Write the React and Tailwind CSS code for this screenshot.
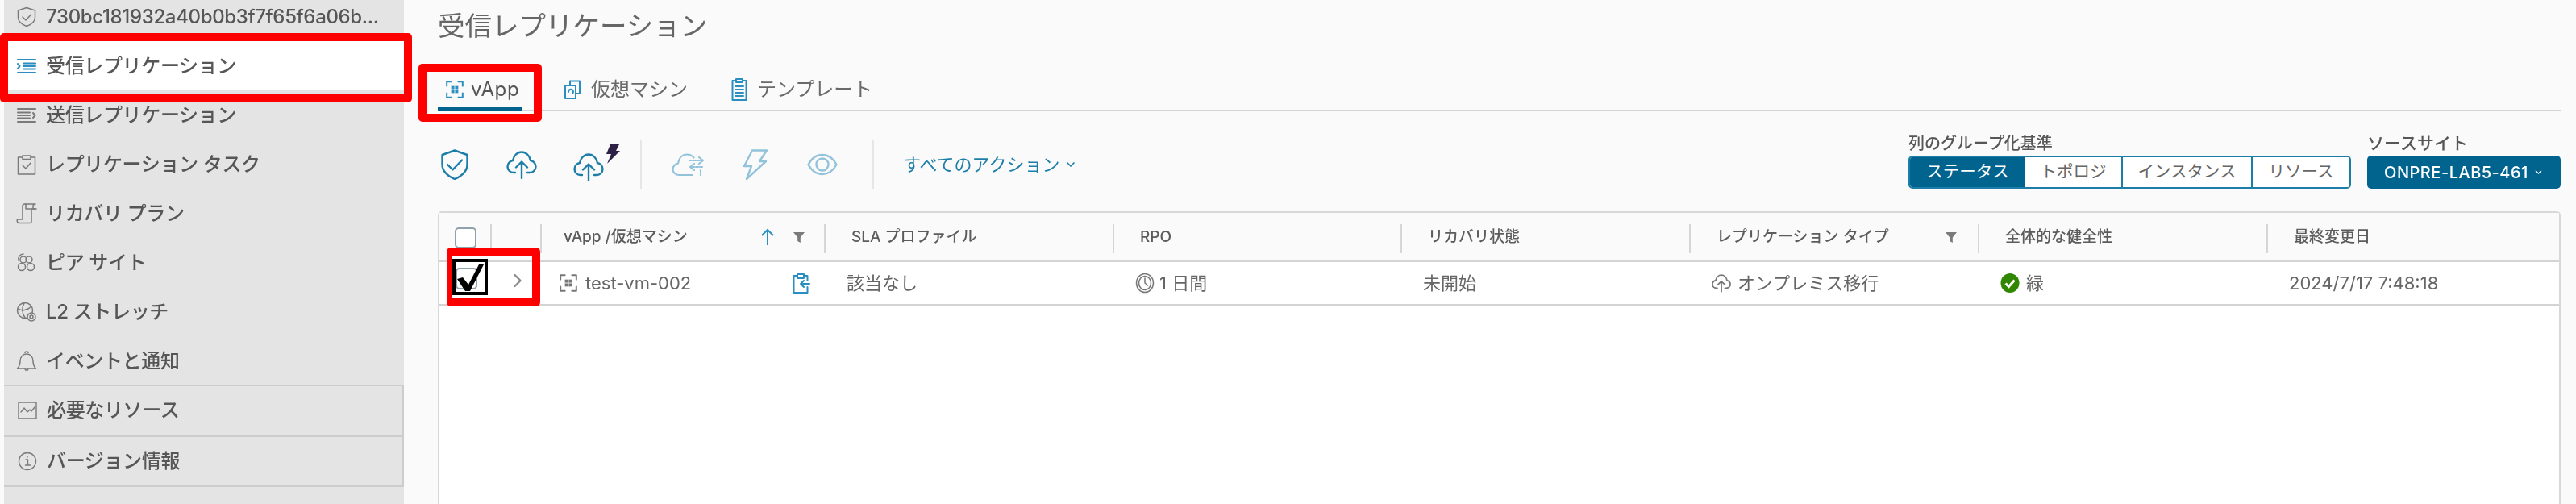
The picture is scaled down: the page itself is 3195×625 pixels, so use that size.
import { ChevronDown, ChevronRight } from 'lucide-react';

const FONT = 'font-["Inter","Noto_Sans_CJK_JP",sans-serif]';

function Ico({ w = 24, h = 24, vb, sw = 1.6, className = '', children }) {
  return (
    <svg
      width={w}
      height={h}
      viewBox={vb || `0 0 ${w} ${h}`}
      fill="none"
      stroke="currentColor"
      strokeWidth={sw}
      strokeLinecap="round"
      strokeLinejoin="round"
      className={`shrink-0 ${className}`}
    >
      {children}
    </svg>
  );
}

const ShieldIcon = ({ w = 34, h = 38, sw = 2.4 }) => (
  <Ico w={w} h={h} vb="0 0 34 38" sw={sw}>
    <path d="M17 1.5 32.5 7v12c0 9-7.5 14.500-15.500 18C9 33.500 1.500 28 1.500 19V7Z" />
    <path d="m8 19 6.500 6.500L26 13.500" />
  </Ico>
);

const CloudUp = ({ w = 38, h = 36, sw = 2.4 }) => (
  <Ico w={w} h={h} vb="0 0 38 36" sw={sw}>
    <path d="M11 28H9c-4.500 0-7.500-3.500-7.500-7.500s3-7 6.500-7.500C9 7 13.500 2.500 19 2.500S29 7 30 13c3.500.5 6.500 3.500 6.500 7.500S33.500 28 29 28h-3" />
    <path d="M19 35V15M12 21.500l7-7 7 7" />
  </Ico>
);

const VappIcon = ({ className = '' }) => (
  <Ico w={24} h={24} vb="0 0 22 22" sw={1.8} className={className}>
    <path d="M7 2H2v5M15 2h5v5M7 20H2v-5M15 20h5v-5" />
    <path d="M7 7h8v8H7z" fill="currentColor" stroke="none" />
    <path d="M11 7v8M7 11h8" stroke="#fafafa" strokeWidth="0.8" />
  </Ico>
);

const Filter = () => (
  <svg width="16" height="16" viewBox="0 0 16 16" className="shrink-0 text-[#7b7b7b]" fill="currentColor">
    <path d="M1 2h14L9.800 8.500V15l-3.600-2V8.500Z" />
  </svg>
);

const sideItems = [
  {
    label: '730bc181932a40b0b3f7f65f6a06b...',
    icon: (
      <Ico w={24} h={26} vb="0 0 24 26" sw={1.5}>
        <path d="M12 1.500 22.500 5v8.500c0 5.500-5 9-10.500 11C6.500 22.500 1.500 19 1.500 13.500V5Z" />
        <path d="m7 13 4 4 6.500-7" />
      </Ico>
    ),
  },
  {
    label: '受信レプリケーション',
    active: true,
    icon: (
      <Ico w={24} h={20} sw={2} className="text-[#2a8fc0]">
        <path d="M1 2h22M8 6.500h15M8 10h15M8 13.500h15M1 18h22" />
        <path d="m1 7 2.500 3L1 13" />
      </Ico>
    ),
  },
  {
    label: '送信レプリケーション',
    icon: (
      <Ico w={24} h={20} sw={2}>
        <path d="M1 2h22M1 6.500h15M1 10h15M1 13.500h15M1 18h22" />
        <path d="m20 7 2.500 3-2.500 3" />
      </Ico>
    ),
  },
  {
    label: 'レプリケーション タスク',
    icon: (
      <Ico w={24} h={26} vb="0 0 24 26" sw={1.5}>
        <path d="M7 4H1.500v21h21V4H17" />
        <path d="M7 2h10v4.500H7z" />
        <path d="m7 14 4 4 6-7" />
      </Ico>
    ),
  },
  {
    label: 'リカバリ プラン',
    icon: (
      <Ico w={26} h={26} sw={1.500}>
        <path d="M8 4c0-2 1-3 3-3h13c-2 0-3 1-3 3v3h4" />
        <path d="M8 4v16H2c-1 0-1.500 3.500 1 4.500h14c1.500 0 2-1 2-2V7" />
        <path d="M12 1v6h12" />
      </Ico>
    ),
  },
  {
    label: 'ピア サイト',
    icon: (
      <Ico w={26} h={26} sw={1.500}>
        <circle cx="9" cy="9" r="4" />
        <circle cx="16" cy="9" r="4" />
        <circle cx="7" cy="18" r="4.500" />
        <circle cx="18" cy="18" r="4.500" />
        <path d="M3 10C2 6 5 2 9 2" />
      </Ico>
    ),
  },
  {
    label: 'L2 ストレッチ',
    icon: (
      <Ico w={26} h={26} sw={1.500}>
        <circle cx="11" cy="11" r="9.500" />
        <path d="M2 9c5 3 12 2 17-3M10 2c-3 5-3 12 1 18" />
        <circle cx="19" cy="19" r="5" fill="#e4e4e4" />
        <circle cx="19" cy="19" r="2" />
      </Ico>
    ),
  },
  {
    label: 'イベントと通知',
    icon: (
      <Ico w={26} h={26} sw={1.500}>
        <path d="M1.500 22c2.500-2.500 3.500-4 3.500-9 0-5 3-9 8-9s8 4 8 9c0 5 1 6.500 3.500 9Z" />
        <path d="M11 2.500c0-2 4-2 4 0M11 22c0 3 4 3 4 0" />
      </Ico>
    ),
  },
];

const sideBoxes = [
  {
    label: '必要なリソース',
    icon: (
      <Ico w={24} h={22} sw={1.400}>
        <path d="M1 1h22v20H1z" />
        <path d="m4 13 4-5 4 5 3-3 2 2 4-5" />
      </Ico>
    ),
  },
  {
    label: 'バージョン情報',
    icon: (
      <Ico w={24} h={24} sw={1.400}>
        <circle cx="12" cy="12" r="10.500" />
        <path d="M10 10h2.500v7M9.500 17h6M12 6.500v.5" />
      </Ico>
    ),
  },
];

function SideRow({ item }) {
  return (
    <div className={`flex h-[61px] items-center gap-3 pl-4 ${item.active ? 'bg-white' : ''}`}>
      <span className="flex w-6 justify-center text-[#7a7a7a]">{item.icon}</span>
      <span className="whitespace-nowrap text-[24px] font-medium leading-none tracking-[-0.35px] text-[#565656]">
        {item.label}
      </span>
    </div>
  );
}

function Tab({ icon, label, active, className = '' }) {
  return (
    <div
      className={`flex h-[72px] items-center pt-[22px] text-[24px] leading-none ${
        active ? 'w-[105px] gap-2 border-b-[5px] border-[#00648f] px-[9px] text-[#565656]' : 'gap-3 text-[#6a6a6a]'
      } ${className}`}
    >
      <span className="text-[#2a8fc0]">{icon}</span>
      {label}
    </div>
  );
}

const columns = [
  { head: 'SLA プロファイル', cell: '該当なし' },
  { head: 'RPO', cell: '1 日間', kind: 'clock' },
  { head: 'リカバリ状態', cell: '未開始' },
  { head: 'レプリケーション タイプ', cell: 'オンプレミス移行', kind: 'cloud', filter: true },
  { head: '全体的な健全性', cell: '緑', kind: 'green' },
  { head: '最終変更日', cell: '2024/7/17 7:48:18' },
];

const GRID = 'grid grid-cols-[63px_62px_352px_358px_357px_358px_358px_358px_1fr]';

function HeadCell({ children, className = '' }) {
  return (
    <div className="relative flex h-full items-center">
      <span className="absolute left-0 top-[14px] h-[36px] w-0.5 bg-[#d6d6d6]" />
      <div className={`flex w-full items-center text-[19px] font-medium leading-none text-[#5c5c5c] ${className}`}>
        {children}
      </div>
    </div>
  );
}

function RowIcon({ kind }) {
  if (kind === 'clock') {
    return (
      <Ico w={24} h={26} sw={1.500} vb="0 0 24 26" className="mr-[6px] text-[#777]">
        <ellipse cx="12" cy="13" rx="10.500" ry="11.500" />
        <ellipse cx="12" cy="13" rx="7.500" ry="8.500" />
        <path d="M12 7v6l3.500 3" />
      </Ico>
    );
  }
  if (kind === 'cloud') {
    return (
      <span className="mr-2 text-[#777]">
        <CloudUp w={24} h={24} sw={2.800} />
      </span>
    );
  }
  if (kind === 'green') {
    return (
      <svg width="24" height="26" viewBox="0 0 24 26" className="mr-2 shrink-0">
        <ellipse cx="12" cy="13" rx="11.500" ry="12" fill="#318700" />
        <path d="m6.500 13.500 4 4 7-8" fill="none" stroke="#fff" strokeWidth="3" />
      </svg>
    );
  }
  return null;
}

export default function App() {
  return (
    <div className={`relative flex h-[625px] w-[3195px] overflow-hidden bg-[#fafafa] pl-[5px] ${FONT}`}>
      {/* sidebar */}
      <aside className="w-[496px] shrink-0 bg-[#e4e4e4] pt-px blur-[0.5px]">
        <div className="-mt-[11px]">
          {sideItems.map((item) => (
            <SideRow key={item.label} item={item} />
          ))}
        </div>
        <div className="-mt-px">
          {sideBoxes.map((item) => (
            <div key={item.label} className="flex h-[64px] items-center gap-3 border-y-2 border-r-2 border-[#cdcdcd] pl-[17px] [&+div]:-mt-px">
              <span className="flex w-6 justify-center text-[#7a7a7a]">{item.icon}</span>
              <span className="whitespace-nowrap text-[24px] font-medium leading-none tracking-[-0.35px] text-[#565656]">
                {item.label}
              </span>
            </div>
          ))}
        </div>
      </aside>

      {/* main */}
      <main className="flex min-w-0 flex-1 flex-col pl-[42px] pr-[19px] blur-[0.5px]">
        <h1 className="flex h-[66px] items-center text-[33.500px] font-normal leading-none text-[#666]">
          受信レプリケーション
        </h1>

        <div className="flex h-[72px] items-end border-b-2 border-[#d4d4d4]">
          <Tab active icon={<VappIcon />} label="vApp" className="-mb-[2px] tracking-wide" />
          <Tab
            className="ml-[51px]"
            icon={
              <Ico w={22} h={26} sw={2}>
                <path d="M8 8V2.500h12V18h-5" />
                <path d="M2 8h13v16H2z" />
                <path d="M6 16a3 3 0 1 1 5 2" />
              </Ico>
            }
            label="仮想マシン"
          />
          <Tab
            className="ml-[54px]"
            icon={
              <Ico w={20} h={30} sw={2}>
                <path d="M6 4H1.500v24h17V4H14" />
                <path d="M6 2h8v4H6z" />
                <path d="M5 11h10M5 15h10M5 19h10M5 23h10" />
              </Ico>
            }
            label="テンプレート"
          />
        </div>

        <div className="flex h-[124px] shrink-0 items-end justify-between pb-[28px]">
          <div className="flex h-[60px] items-center pl-[4px] text-[#1c7ea8]">
            <ShieldIcon />
            <span className="ml-[47px]">
              <CloudUp />
            </span>
            <span className="relative ml-[45px] flex h-[46px] w-[58px] items-end pb-[2px]">
              <CloudUp />
              <svg width="18" height="24" viewBox="0 0 18 24" className="absolute right-0 top-[-2px] text-[#2d1f46]" fill="currentColor">
                <path d="M6 0h11l-4 8h5L2 24l5-12H1Z" />
              </svg>
            </span>
            <span className="ml-[25px] h-[60px] w-0.5 bg-[#e6e6e6]" />
            <span className="ml-[37px] text-[#93c3da]">
              <Ico w={42} h={30} sw={2.200}>
                <path d="M26 28H9c-4 0-7.500-3-7.500-7s3-7 6.500-7.500C9 7 13 2.500 19 2.500c3.500 0 6.500 1.500 8.500 4" />
                <path d="M22 10h16m-4-4 5 4-5 4M38 18H24m4-4-5 4 5 4M36 22v6" strokeDasharray="3 2" />
              </Ico>
            </span>
            <span className="ml-[46px] text-[#93c3da]">
              <Ico w={32} h={38} sw={2.400}>
                <path d="M12 1.500h18L21 15h8L5 37l6-16H2Z" />
              </Ico>
            </span>
            <span className="ml-[48px] text-[#93c3da]">
              <Ico w={38} h={28} sw={2.400}>
                <path d="M1.500 14C6 5.500 12 2 19 2s13 3.500 17.500 12C32 22.500 26 26 19 26S6 22.500 1.500 14Z" />
                <circle cx="19" cy="14" r="7.500" />
              </Ico>
            </span>
            <span className="ml-[43px] h-[60px] w-0.5 bg-[#e6e6e6]" />
            <span className="ml-[36px] text-[22px] leading-none text-[#1c7ea8]">すべてのアクション</span>
            <ChevronDown size={16} strokeWidth={2.500} className="ml-[6px]" />
          </div>

          <div className="flex items-end gap-5">
            <div>
              <div className="mb-[3px] text-[20px] font-medium leading-[24px] text-[#565656]">列のグループ化基準</div>
              <div className="flex h-[41px] w-[549px] overflow-hidden rounded-[5px] border-2 border-[#1c7ea8] text-[20.500px] leading-none text-[#666]">
                <div className="flex w-[143px] items-center justify-center bg-[#00648f] text-white">ステータス</div>
                <div className="flex w-[121px] items-center justify-center border-r-2 border-[#1c7ea8] bg-white">トポロジ</div>
                <div className="flex w-[161px] items-center justify-center border-r-2 border-[#1c7ea8] bg-white">インスタンス</div>
                <div className="flex flex-1 items-center justify-center bg-white">リソース</div>
              </div>
            </div>
            <div>
              <div className="mb-[3px] text-[21px] font-medium leading-[24px] text-[#565656]">ソースサイト</div>
              <div className="flex h-[41px] w-[240px] items-center justify-center gap-[6px] rounded-[5px] bg-[#00648f] text-[20px] font-medium leading-none tracking-wide text-white">
                ONPRE-LAB5-461
                <ChevronDown size={13} strokeWidth={2.500} />
              </div>
            </div>
          </div>
        </div>

        {/* table */}
        <div className="flex-1 rounded-t-[5px] border-x-2 border-t-2 border-[#d8d8d8] bg-white">
          <div className={`${GRID} h-[61px] border-b-2 border-[#d4d4d4] bg-[#fafafa]`}>
            <div className="flex items-start pl-[19px] pt-[18px]">
              <span className="h-[26px] w-[27px] rounded-[5px] border-2 border-[#8fa1ab] bg-white" />
            </div>
            <HeadCell />
            <HeadCell className="pl-[29px]">
              vApp /仮想マシン
              <svg width="18" height="22" viewBox="0 0 18 22" className="ml-[90px] shrink-0 text-[#2a8fc0]" fill="none" stroke="currentColor" strokeWidth="2">
                <path d="M9 21V2M2 9l7-7 7 7" />
              </svg>
              <span className="ml-[22px]">
                <Filter />
              </span>
            </HeadCell>
            {columns.map((col) => (
              <HeadCell key={col.head} className="pl-[34px]">
                {col.head}
                {col.filter && (
                  <span className="ml-[69px]">
                    <Filter />
                  </span>
                )}
              </HeadCell>
            ))}
          </div>

          <div className={`${GRID} h-[54px] border-b-2 border-[#d4d4d4] text-[22px] leading-none text-[#666]`}>
            <div className="flex items-start pl-[20px] pt-[7px]">
              <span className="h-[27px] w-[27px] rounded-[5px] border-2 border-[#8fa1ab] bg-white" />
            </div>
            <div className="flex items-start pl-[20px] pt-[9px] text-[#8a8a8a]">
              <ChevronRight size={28} strokeWidth={2} />
            </div>
            <div className="flex items-center pl-[23px]">
              <span className="text-[#777]">
                <VappIcon />
              </span>
              <span className="ml-[9px]">test-vm-002</span>
              <span className="ml-[126px] text-[#2a8fc0]">
                <Ico w={22} h={28} sw={2}>
                  <path d="M6 5H1.500v21h17v-7M18.500 11V5H14" />
                  <path d="M6 3h8v5H6z" />
                  <path d="M21 15H10m4-4-4 4 4 4" />
                </Ico>
              </span>
            </div>
            {columns.map((col) => (
              <div key={col.head} className="flex items-center pl-[28px]">
                <RowIcon kind={col.kind} />
                {col.cell}
              </div>
            ))}
          </div>
        </div>
      </main>

      {/* red annotation boxes on top of the screenshot */}
      <div className="absolute left-0 top-[41px] h-[86px] w-[511px] rounded-[5px] border-[10px] border-[#ff0000]" />
      <div className="absolute left-[519px] top-[79px] h-[72px] w-[153px] rounded-[5px] border-[10px] border-[#ff0000]" />
      <div className="absolute left-[554px] top-[307px] h-[73px] w-[116px] rounded-[5px] border-y-[10px] border-l-[7px] border-r-[10px] border-[#ff0000]" />
      <div className="absolute left-[561px] top-[321px] flex h-[45px] w-[44px] items-center justify-center border-[4px] border-black">
        <svg width="40" height="40" viewBox="0 0 40 40" className="shrink-0">
          <path d="M4 22 11 20 18 29 31 4 37 4 20 37 14 37Z" fill="#000" />
        </svg>
      </div>
    </div>
  );
}
